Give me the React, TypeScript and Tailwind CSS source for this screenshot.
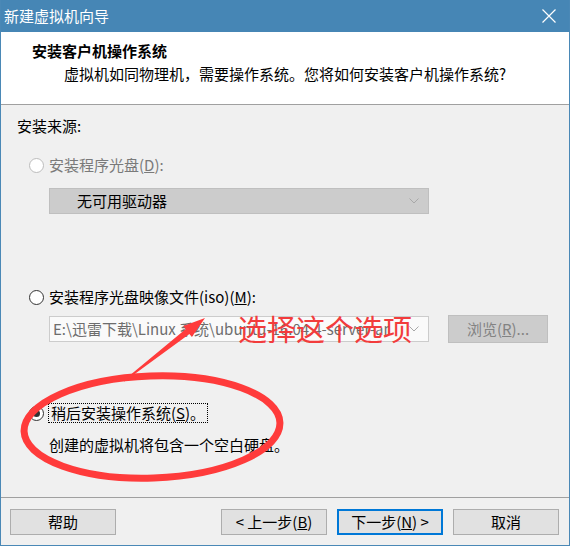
import React from "react";

function Radio({ checked, disabled }: { checked?: boolean; disabled?: boolean }) {
  return (
    <span
      className={
        "flex h-[15px] w-[15px] shrink-0 items-center justify-center rounded-full border bg-white " +
        (disabled ? "border-[#bcbcbc]" : "border-[#333333]")
      }
    >
      {checked && <span className="h-[7px] w-[7px] rounded-full bg-[#333333]" />}
    </span>
  );
}

function Chevron({ color }: { color: string }) {
  return (
    <svg width="10" height="6" viewBox="0 0 10 6" className="shrink-0">
      <polyline points="0.5,0.5 5,5 9.5,0.5" fill="none" stroke={color} strokeWidth="1" />
    </svg>
  );
}

function Button({ children, focused }: { children: React.ReactNode; focused?: boolean }) {
  return (
    <div
      className={
        "flex h-[26px] w-[106px] items-center justify-center bg-[#e1e1e1] text-[15px] text-black " +
        (focused ? "border-2 border-[#0078d7]" : "border border-[#adadad]")
      }
    >
      {children}
    </div>
  );
}

export default function App() {
  return (
    <div className="relative flex h-[546px] w-[570px] flex-col border-x border-b border-[#4a88b6] bg-[#f0f0f0] font-['Noto_Sans_CJK_SC',sans-serif] leading-[20px] text-black">
      {/* title bar */}
      <div className="flex h-[32px] shrink-0 items-center justify-between bg-[#4686b5] pl-[3px] pr-[13px] text-[15px] text-white">
        <span>新建虚拟机向导</span>
        <svg width="14" height="14" viewBox="0 0 14 14">
          <path d="M0.5 0.5 L13.5 13.5 M13.5 0.5 L0.5 13.5" stroke="#ffffff" strokeWidth="1.2" />
        </svg>
      </div>

      {/* header */}
      <div className="h-[73px] shrink-0 border-b border-[#a0a0a0] bg-white pt-[9px] text-[15px]">
        <div className="pl-[31px] font-bold">安装客户机操作系统</div>
        <div className="mt-[3px] pl-[63px]">虚拟机如同物理机，需要操作系统。您将如何安装客户机操作系统?</div>
      </div>

      {/* body */}
      <div className="flex flex-1 flex-col pt-[11px] text-[15px]">
        <div className="pl-[16px]">安装来源:</div>

        <div className="mt-[19px] flex items-center gap-[5px] pl-[28px] text-[#7a7a7a]">
          <Radio disabled />
          <span>
            安装程序光盘(<span className="underline">D</span>):
          </span>
        </div>

        <div className="ml-[48px] mt-[13px] flex h-[26px] w-[380px] items-center justify-between border border-[#bfbfbf] bg-[#cccccc] pl-[27px] pr-[9px]">
          <span>无可用驱动器</span>
          <Chevron color="#a8a8a8" />
        </div>

        <div className="mt-[73px] flex items-center gap-[5px] pl-[28px]">
          <Radio />
          <span>
            安装程序光盘映像文件(iso)(<span className="underline">M</span>):
          </span>
        </div>

        <div className="mt-[8px] flex h-[28px] items-center">
          <div className="ml-[48px] flex h-[26px] w-[380px] items-center justify-between border border-[#cccccc] bg-[#fafafa] pl-[3px] pr-[9px] text-[#6d6d6d]">
            <span className="w-[336px] overflow-hidden whitespace-nowrap">
              E:\迅雷下载\Linux 系统\ubuntu-16.04.4-server-amd64.iso
            </span>
            <Chevron color="#a8a8a8" />
          </div>
          <div className="ml-[19px] flex h-[28px] w-[100px] items-center justify-center border border-[#bfbfbf] bg-[#cccccc] text-[#838383]">
            浏览(<span className="underline">R</span>)...
          </div>
        </div>

        <div className="mt-[60px] flex items-center gap-[4px] pl-[28px]">
          <Radio checked />
          <span className="h-[20px] border border-dotted border-black pl-[2px] pr-[2px] leading-[18px]">
            稍后安装操作系统(<span className="underline">S</span>)。
          </span>
        </div>

        <div className="mt-[12px] pl-[48px]">创建的虚拟机将包含一个空白硬盘。</div>

        {/* footer */}
        <div className="mt-auto flex h-[48px] items-start justify-between border-t border-[#a0a0a0] pl-[9px] pr-[10px] pt-[11px]">
          <Button>帮助</Button>
          <div className="flex gap-[10px]">
            <Button>
              &lt; 上一步(<span className="underline">B</span>)
            </Button>
            <Button focused>
              下一步(<span className="underline">N</span>) &gt;
            </Button>
            <Button>取消</Button>
          </div>
        </div>
      </div>

      {/* annotation overlay */}
      <svg
        className="pointer-events-none absolute left-[-1px] top-0"
        width="570"
        height="546"
        viewBox="0 0 570 546"
      >
        <ellipse
          cx="152"
          cy="427"
          rx="128"
          ry="51"
          transform="rotate(-2 152 427)"
          fill="none"
          stroke="#ff3b3b"
          strokeWidth="7"
        />
        <polygon
          points="123.6,380.4 185.8,329.1 183.3,326 205,318 191.9,337 189.4,333.9 124.4,381.6"
          fill="#ff3b3b"
        />
      </svg>
      <div className="pointer-events-none absolute left-[237px] top-[312px] whitespace-nowrap text-[29px] leading-[32px] text-[#f23c3c]">
        选择这个选项
      </div>
    </div>
  );
}
